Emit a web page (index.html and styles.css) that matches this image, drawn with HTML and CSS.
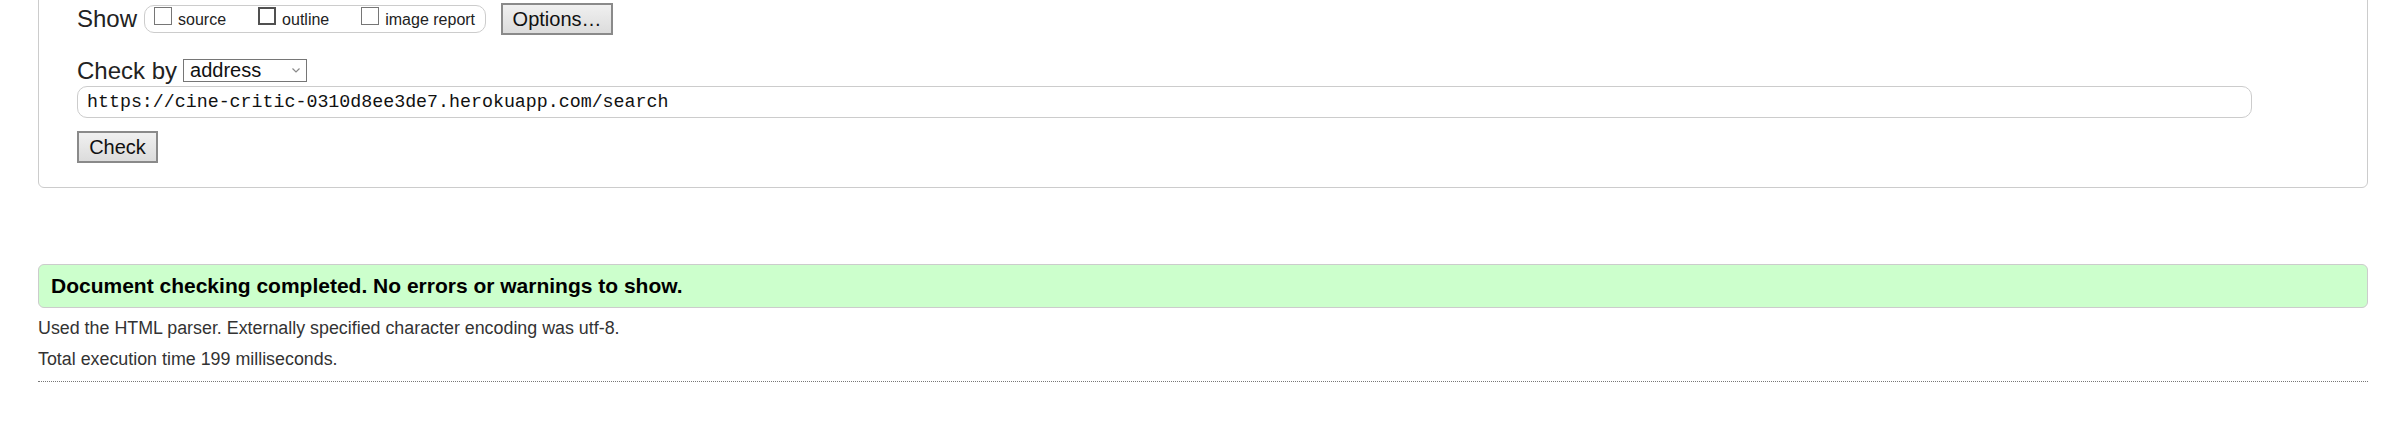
FILE: index.html
```html
<!DOCTYPE html>
<html lang="en">
<head>
<meta charset="utf-8">
<title>Nu Html Checker</title>
<link rel="stylesheet" href="styles.css">
</head>
<body>
<div class="page">
  <form class="checker">
    <div class="row row-show">
      <span class="label">Show</span>
      <span class="pill">
        <label class="opt"><span class="box"></span>source</label><label class="opt opt-gap"><span class="box box-hover"></span>outline</label><label class="opt opt-gap"><span class="box"></span>image report</label>
      </span>
      <button type="button" class="btn btn-options">Options…</button>
    </div>
    <div class="row row-by">
      <span class="label">Check by</span>
      <span class="select-wrap">
        <select class="select"><option>address</option></select>
        <svg class="chev" width="8" height="5" viewBox="0 0 8 5"><path d="M0.5 0.5 L4 4 L7.5 0.5" fill="none" stroke="#8a8a8a" stroke-width="1.2"/></svg>
      </span>
    </div>
    <input class="url" type="text" value="https://cine-critic-0310d8ee3de7.herokuapp.com/search">
    <div class="row-btn"><button type="button" class="btn btn-check">Check</button></div>
  </form>

  <div class="success">Document checking completed. No errors or warnings to show.</div>
  <p class="info">Used the HTML parser. Externally specified character encoding was utf-8.</p>
  <p class="info">Total execution time 199 milliseconds.</p>
  <hr class="sep">
</div>
</body>
</html>
```

FILE: styles.css
```css
html, body {
  margin: 0;
  padding: 0;
  background: #fff;
}
body {
  font-family: "Liberation Sans", Arial, sans-serif;
  color: #222;
}
.page {
  margin-left: 38px;
  width: 2330px;
}
.checker {
  margin-top: -20px;
  border: 1px solid #cccccc;
  border-radius: 6px;
  padding: 22px 38px 24px 38px;
}
.row {
  display: flex;
  align-items: center;
}
.row-show {
  height: 32px;
}
.label {
  font-size: 24px;
  line-height: 28px;
}
.pill {
  box-sizing: border-box;
  height: 28px;
  margin-left: 7px;
  border: 1px solid #cccccc;
  border-radius: 10px;
  padding: 1px 10px 0 9px;
  font-size: 16px;
  line-height: 18px;
  white-space: nowrap;
  color: #222;
}
.opt {
  display: inline;
}
.opt-gap {
  margin-left: 32px;
}
.box {
  display: inline-block;
  box-sizing: border-box;
  width: 18px;
  height: 18px;
  border: 1px solid #767676;
  background: #fff;
  margin-right: 6px;
  vertical-align: baseline;
}
.box-hover {
  border: 2px solid #505050;
}
.btn {
  box-sizing: border-box;
  height: 32px;
  font-family: "Liberation Sans", Arial, sans-serif;
  font-size: 20px;
  color: #111;
  background: linear-gradient(#f0f0f0, #dcdcdc);
  border: 2px solid #8a8a8a;
  border-radius: 0;
  padding: 0;
}
.btn-options {
  width: 112px;
  margin-left: 15px;
}
.row-by {
  margin-top: 21px;
  height: 29px;
}
.select-wrap {
  display: grid;
  margin-left: 6px;
}
.select, .chev {
  grid-area: 1 / 1;
}
.select {
  appearance: none;
  -webkit-appearance: none;
  box-sizing: border-box;
  width: 124px;
  height: 23px;
  border: 1px solid #767676;
  border-radius: 0;
  background: #fff;
  padding: 0 0 0 6px;
  font-family: "Liberation Sans", Arial, sans-serif;
  font-size: 20px;
  line-height: 21px;
  color: #111;
}
.chev {
  justify-self: end;
  align-self: center;
  margin-right: 7px;
}
.url {
  display: block;
  box-sizing: border-box;
  width: 2175px;
  height: 32px;
  margin: 1px 0 0 0;
  border: 1px solid #cccccc;
  border-radius: 10px;
  padding: 0 9px;
  font-family: "Liberation Mono", "DejaVu Sans Mono", monospace;
  font-size: 18.3px;
  color: #111;
  background: #fff;
}
.row-btn {
  margin-top: 13px;
  height: 32px;
}
.btn-check {
  width: 81px;
}
.success {
  margin-top: 76px;
  box-sizing: border-box;
  height: 44px;
  background: #ccffcc;
  border: 1px solid #cccccc;
  border-radius: 6px;
  padding: 9px 12px 0 12px;
  font-size: 21px;
  font-weight: bold;
  line-height: 24px;
  color: #000;
}
.info {
  margin: 10px 0 0 0;
  font-size: 17.85px;
  line-height: 21px;
  color: #333;
}
.sep {
  margin: 11px 0 0 0;
  border: 0;
  border-top: 1px dotted #777;
  height: 0;
}
```
